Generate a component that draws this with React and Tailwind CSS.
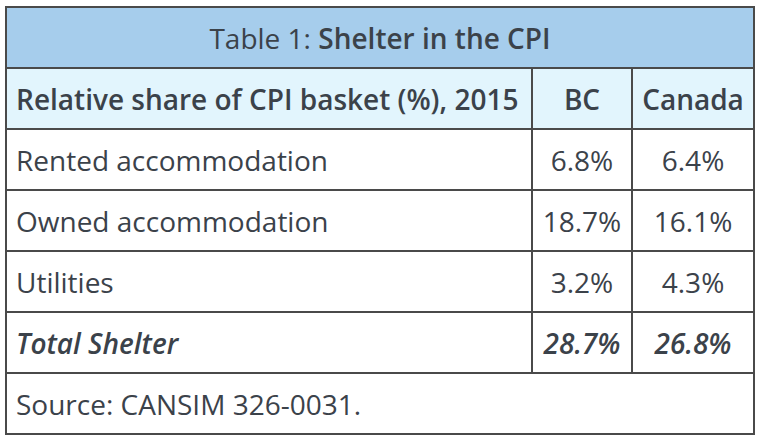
export default function App() {
  const rows = [
    ["Rented accommodation", "6.8%", "6.4%"],
    ["Owned accommodation", "18.7%", "16.1%"],
    ["Utilities", "3.2%", "4.3%"],
  ];
  const cell = "border-2 border-[#4a4a4a] h-[61px] p-0 align-middle";
  return (
    <div className="w-[760px] h-[437px] bg-white pt-[6px] pl-[5px]" style={{ fontFamily: '"Open Sans", sans-serif' }}>
      <table className="border-collapse w-[748px] table-fixed text-[#3b424a] text-[28px] leading-none">
        <colgroup>
          <col className="w-[526px]" />
          <col className="w-[100px]" />
          <col className="w-[122px]" />
        </colgroup>
        <tbody>
          <tr>
            <td colSpan={3} className={`${cell} bg-[#a6cdec] text-center`}>
              Table 1: <span className="font-semibold">Shelter in the CPI</span>
            </td>
          </tr>
          <tr className="bg-[#e2f5fd] font-semibold">
            <td className={`${cell} pl-[9px]`}>Relative share of CPI basket (%), 2015</td>
            <td className={`${cell} text-center`}>BC</td>
            <td className={`${cell} text-center`}>Canada</td>
          </tr>
          {rows.map((r) => (
            <tr key={r[0]}>
              <td className={`${cell} pl-[9px]`}>{r[0]}</td>
              <td className={`${cell} text-center`}>{r[1]}</td>
              <td className={`${cell} text-center`}>{r[2]}</td>
            </tr>
          ))}
          <tr className="font-semibold italic">
            <td className={`${cell} pl-[9px]`}>Total Shelter</td>
            <td className={`${cell} text-center`}>28.7%</td>
            <td className={`${cell} text-center`}>26.8%</td>
          </tr>
          <tr>
            <td colSpan={3} className={`${cell} pl-[9px]`}>Source: CANSIM 326-0031.</td>
          </tr>
        </tbody>
      </table>
    </div>
  );
}
